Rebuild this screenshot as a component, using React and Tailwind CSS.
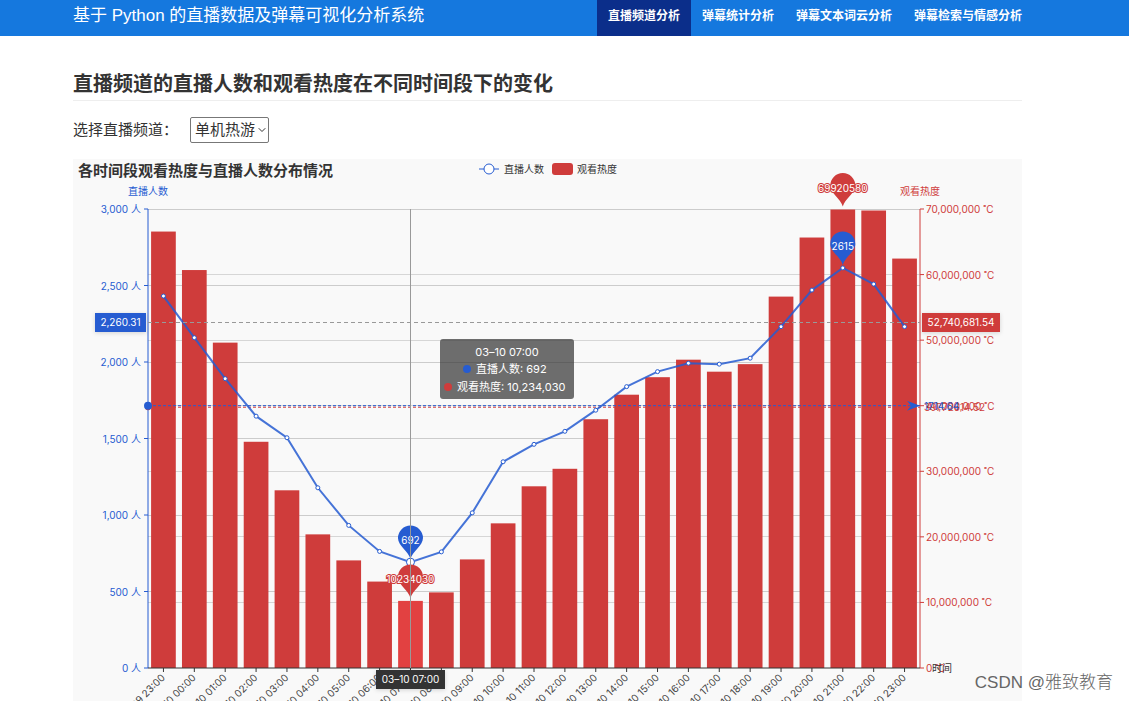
import { useState } from 'react';
import { ChevronDown } from 'lucide-react';

const navItems = ['直播频道分析', '弹幕统计分析', '弹幕文本词云分析', '弹幕检索与情感分析'];
const channels = ['单机热游', '网游竞技', '手游休闲', '娱乐天地'];

// One entry per hour, starting at 03-09 23:00
const viewers = [
    2431, 2159, 1891, 1646, 1505, 1178, 932, 762, 692, 759, 1014, 1348, 1462,
    1547, 1685, 1839, 1937, 1992, 1986, 2025, 2231, 2470, 2615, 2509, 2231
];
const heat = [
    66560000, 60690000, 49620000, 34500000, 27100000, 20380000, 16410000, 13180000, 10234030,
    11530000, 16560000, 22060000, 27710000, 30380000, 37940000, 41680000, 44350000, 47020000,
    45190000, 46340000, 56640000, 65650000, 69920580, 69770000, 62440000
];
const hours = viewers.map((_, i) => {
    const day = i === 0 ? '03-09' : '03-10';
    return `${day} ${String((i + 23) % 24).padStart(2, '0')}:00`;
});

const BLUE = '#265cd1';
const RED = '#cf3c3b';

const LEFT = 75;
const RIGHT = 847;
const TOP = 50;
const BOTTOM = 509;
const STEP = (RIGHT - LEFT) / viewers.length;

const xAt = (i) => LEFT + STEP * (i + 0.5);
const yViewers = (v) => BOTTOM - (v / 3000) * (BOTTOM - TOP);
const yHeat = (v) => BOTTOM - (v / 70000000) * (BOTTOM - TOP);

const Pin = ({ x, y, color, label, outlined }) => (
    <g>
        <path
            transform={`translate(${x} ${y})`}
            d="M0 -3 C-2 -11 -12.5 -16 -12.5 -24 A12.5 12.5 0 1 1 12.5 -24 C12.5 -16 2 -11 0 -3 Z"
            fill={color}
        />
        <text
            x={x}
            y={y - 18}
            textAnchor="middle"
            fill="#fff"
            stroke={outlined ? color : 'none'}
            strokeWidth="2"
            paintOrder="stroke"
        >
            {label}
        </text>
    </g>
);

const AxisTag = ({ x, y, width, color, children }) => (
    <g>
        <rect x={x} y={y} width={width} height="19" fill={color} className="drop-shadow-sm" />
        <text x={x + width / 2} y={y + 13} textAnchor="middle" fill="#fff">{children}</text>
    </g>
);

const Chart = () => {
    const active = 8;
    const peak = 22;
    const avgViewers = 1714.64;
    const avgHeat = 39772614.52;
    const points = viewers.map((v, i) => `${xAt(i)},${yViewers(v)}`).join(' ');

    return (
        <svg
            viewBox="0 0 949 542"
            className="block w-full bg-[#f9f9f9] text-[10px] font-[Inter,'Noto_Sans_CJK_SC',sans-serif]"
            role="img"
            aria-label="各时间段观看热度与直播人数分布情况"
        >
            <text x="5" y="17" fill="#333" className="text-[15px] font-bold">各时间段观看热度与直播人数分布情况</text>

            {/* Legend */}
            <path d="M406 10 H426" stroke={BLUE} />
            <circle cx="416" cy="10" r="5" fill="#fff" stroke={BLUE} />
            <text x="431" y="14" fill="#333">直播人数</text>
            <rect x="479" y="4" width="21" height="12" rx="3" fill={RED} />
            <text x="504" y="14" fill="#333">观看热度</text>

            {/* Grid */}
            <g stroke="#ccc" shapeRendering="crispEdges">
                {[500, 1000, 1500, 2000, 2500, 3000].map(v => (
                    <line key={v} x1={LEFT} x2={RIGHT} y1={yViewers(v)} y2={yViewers(v)} />
                ))}
            </g>
            <g stroke="#d6d6d6" shapeRendering="crispEdges">
                {[1, 2, 3, 4, 5, 6].map(n => (
                    <line key={n} x1={LEFT} x2={RIGHT} y1={yHeat(n * 10000000)} y2={yHeat(n * 10000000)} />
                ))}
            </g>

            {/* Heat bars */}
            {heat.map((v, i) => (
                <rect
                    key={i}
                    x={xAt(i) - STEP * 0.4}
                    y={yHeat(v)}
                    width={STEP * 0.8}
                    height={BOTTOM - yHeat(v)}
                    fill={i === active ? '#e24141' : RED}
                />
            ))}

            {/* Left axis */}
            <text x={LEFT} y="36" textAnchor="middle" fill={BLUE}>直播人数</text>
            <line x1={LEFT} x2={LEFT} y1={TOP} y2={BOTTOM} stroke={BLUE} />
            {[0, 500, 1000, 1500, 2000, 2500, 3000].map(v => (
                <g key={v}>
                    <line x1={LEFT - 4} x2={LEFT} y1={yViewers(v)} y2={yViewers(v)} stroke={BLUE} />
                    <text x={LEFT - 7} y={yViewers(v) + 4} textAnchor="end" fill={BLUE}>
                        {v.toLocaleString('en-US')} 人
                    </text>
                </g>
            ))}

            {/* Right axis */}
            <text x={RIGHT} y="36" textAnchor="middle" fill={RED}>观看热度</text>
            <line x1={RIGHT} x2={RIGHT} y1={TOP} y2={BOTTOM} stroke={RED} />
            {[0, 1, 2, 3, 4, 5, 6, 7].map(n => (
                <g key={n}>
                    <line x1={RIGHT} x2={RIGHT + 4} y1={yHeat(n * 10000000)} y2={yHeat(n * 10000000)} stroke={RED} />
                    <text x={RIGHT + 6} y={yHeat(n * 10000000) + 4} fill={RED}>
                        {(n * 10000000).toLocaleString('en-US')} ˚C
                    </text>
                </g>
            ))}

            {/* Time axis */}
            <line x1={LEFT} x2={RIGHT} y1={BOTTOM} y2={BOTTOM} stroke="#333" />
            {hours.map((h, i) => (
                <g key={h}>
                    <line x1={xAt(i)} x2={xAt(i)} y1={BOTTOM} y2={BOTTOM + 4} stroke="#333" />
                    <text
                        transform={`translate(${xAt(i) - 2} ${BOTTOM + 6}) rotate(-45)`}
                        y="6"
                        textAnchor="end"
                        fill="#444"
                    >
                        {h}
                    </text>
                </g>
            ))}
            <text x={RIGHT + 12} y={BOTTOM + 4} fill="#333">时间</text>

            {/* Average lines */}
            <circle cx={LEFT} cy={yHeat(avgHeat)} r="3" fill={RED} />
            <line x1={LEFT} x2={RIGHT} y1={yHeat(avgHeat)} y2={yHeat(avgHeat)} stroke={RED} strokeDasharray="3 2" />
            <text x={RIGHT + 4} y={yHeat(avgHeat) + 4} fill={RED}>{avgHeat}</text>
            <circle cx={LEFT} cy={yViewers(avgViewers)} r="4" fill={BLUE} />
            <line x1={LEFT} x2={RIGHT} y1={yViewers(avgViewers)} y2={yViewers(avgViewers)} stroke={BLUE} strokeDasharray="3 2" />
            <path transform={`translate(${RIGHT} ${yViewers(avgViewers)})`} d="M0 0 L-13 -5 L-9 0 L-13 5 Z" fill={BLUE} />
            <text x={RIGHT + 4} y={yViewers(avgViewers) + 4} fill={BLUE}>{avgViewers}</text>

            {/* Viewer line */}
            <polyline points={points} fill="none" stroke={BLUE} strokeWidth="2" strokeOpacity="0.85" />
            {viewers.map((v, i) => (
                <circle key={i} cx={xAt(i)} cy={yViewers(v)} r={i === active ? 4 : 2} fill="#fff" stroke={BLUE} />
            ))}

            <Pin x={xAt(peak)} y={yHeat(heat[peak])} color={RED} label={heat[peak]} outlined />
            <Pin x={xAt(peak)} y={yViewers(viewers[peak])} color={BLUE} label={viewers[peak]} />
            <Pin x={xAt(active)} y={yHeat(heat[active])} color={RED} label={heat[active]} outlined />
            <Pin x={xAt(active)} y={yViewers(viewers[active])} color={BLUE} label={viewers[active]} />

            {/* Crosshair */}
            <g stroke="#999" shapeRendering="crispEdges">
                <line x1={xAt(active)} x2={xAt(active)} y1={TOP} y2={BOTTOM} />
                <line x1={LEFT} x2={RIGHT} y1="163" y2="163" strokeDasharray="4 3" />
            </g>
            <AxisTag x={22} y={154} width={51} color={BLUE}>2,260.31</AxisTag>
            <AxisTag x={849} y={154} width={78} color={RED}>52,740,681.54</AxisTag>
            <AxisTag x={303} y={511} width={69} color="#333">{hours[active].replace('-', '–')}</AxisTag>

            {/* Tooltip */}
            <rect x="367" y="180" width="134" height="60" rx="3" fill="#323232" fillOpacity="0.7" />
            <g fill="#fff" className="text-[11px]">
                <text x="434" y="197" textAnchor="middle">{hours[active].replace('-', '–')}</text>
                <circle cx="394" cy="210" r="4" fill={BLUE} />
                <text x="403" y="214">直播人数: {viewers[active]}</text>
                <circle cx="375" cy="228" r="4" fill={RED} />
                <text x="384" y="232">观看热度: {heat[active].toLocaleString('en-US')}</text>
            </g>
        </svg>
    );
};

const App = () => {
    const [channel, setChannel] = useState(channels[0]);

    return (
        <div className="relative min-h-screen overflow-hidden bg-white text-[#333] font-['Liberation_Sans','Noto_Sans_CJK_SC',sans-serif]">
            <header className="flex h-9 items-stretch justify-between bg-[#1578de] pl-[73px] pr-24 text-white">
                <a href="#" className="pt-1 text-[17px] leading-6">基于 Python 的直播数据及弹幕可视化分析系统</a>
                <nav className="flex">
                    {navItems.map((item, i) => (
                        <a
                            key={item}
                            href="#"
                            className={`px-[11px] pt-1 text-xs leading-6 font-bold ${i === 0 ? 'bg-[#0b2e8a]' : ''}`}
                        >
                            {item}
                        </a>
                    ))}
                </nav>
            </header>

            <main className="pl-[73px] pr-[107px] pt-[34px]">
                <h1 className="border-b border-[#eee] pb-0.5 text-xl leading-7 font-bold">
                    直播频道的直播人数和观看热度在不同时间段下的变化
                </h1>

                <div className="flex items-center gap-3 py-4 text-[15px]">
                    <label htmlFor="channel">选择直播频道：</label>
                    <div className="relative">
                        <select
                            id="channel"
                            value={channel}
                            onChange={e => setChannel(e.target.value)}
                            className="block h-[26px] w-[79px] appearance-none rounded-xs border border-[#777] bg-white pl-1 leading-6"
                        >
                            {channels.map(c => <option key={c}>{c}</option>)}
                        </select>
                        <ChevronDown size={12} className="pointer-events-none absolute right-px top-[7px]" />
                    </div>
                </div>

                <Chart />
            </main>

            <span className="absolute bottom-1 right-4 text-[17px] leading-7 font-light text-[#666] font-['Liberation_Sans','Noto_Sans_CJK_SC',sans-serif]">
                CSDN @雅致教育
            </span>
        </div>
    );
};

export default App;
